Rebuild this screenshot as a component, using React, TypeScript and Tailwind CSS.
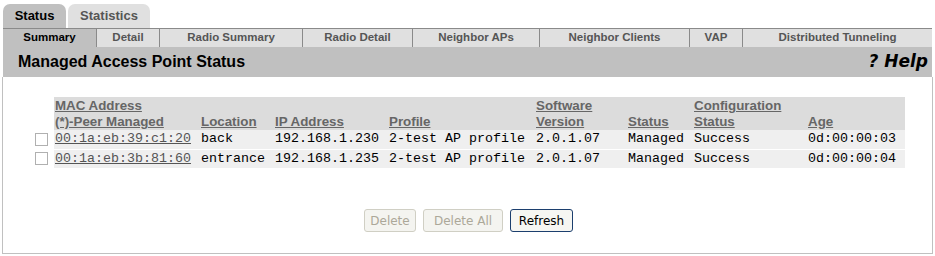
import React from "react";

const subtabs = [
  { label: "Summary", w: 94, active: true },
  { label: "Detail", w: 63 },
  { label: "Radio Summary", w: 143 },
  { label: "Radio Detail", w: 110 },
  { label: "Neighbor APs", w: 127 },
  { label: "Neighbor Clients", w: 150 },
  { label: "VAP", w: 53 },
  { label: "Distributed Tunneling", w: 0 },
];

const rows = [
  ["00:1a:eb:39:c1:20", "back", "192.168.1.230", "2-test AP profile", "2.0.1.07", "Managed", "Success", "0d:00:00:03"],
  ["00:1a:eb:3b:81:60", "entrance", "192.168.1.235", "2-test AP profile", "2.0.1.07", "Managed", "Success", "0d:00:00:04"],
];

const cols: [string, string, number][] = [
  ["MAC Address", "(*)-Peer Managed", 146],
  ["", "Location", 74],
  ["", "IP Address", 114],
  ["", "Profile", 147],
  ["Software", "Version", 92],
  ["", "Status", 66],
  ["Configuration", "Status", 114],
  ["", "Age", 98],
];

export default function App() {
  return (
    <div className="w-[935px] h-[256px] bg-white overflow-hidden" style={{ fontFamily: '"Liberation Sans", Arial, sans-serif' }}>
      <div className="flex items-end gap-[2px] pl-[3px] pt-[4px] h-[28px]">
        <div className="w-[63px] h-[24px] bg-[#c0c0c0] rounded-t-[7px] flex items-center justify-center text-[13px] font-bold text-black">Status</div>
        <div className="w-[82px] h-[24px] bg-[#e0e0e0] rounded-t-[7px] flex items-center justify-center text-[13px] font-bold text-[#555]">Statistics</div>
      </div>
      <div className="mx-[3px] flex h-[19px] border-t border-[#8a8a8a] bg-[#e0e0e0]">
        {subtabs.map((t, i) => (
          <div
            key={t.label}
            className={`flex items-center justify-center text-[11.5px] font-bold ${t.active ? "bg-[#c0c0c0] text-black" : "text-[#555]"} ${i < subtabs.length - 1 ? "border-r border-[#8a8a8a]" : "flex-1"}`}
            style={t.w ? { width: t.w } : undefined}
          >
            {t.label}
          </div>
        ))}
      </div>
      <div className="mx-[3px] h-[30px] bg-[#c0c0c0] flex items-center justify-between pl-[15px] pr-[4px]">
        <span className="text-[16px] font-bold text-black">Managed Access Point Status</span>
        <span className="text-[17px] font-bold italic text-black" style={{ fontFamily: '"DejaVu Sans", Verdana, sans-serif' }}>? Help</span>
      </div>
      <div className="mx-[2px] h-[177px] border-l border-r border-b border-[#c0c0c0] pt-[20px]">
        <table className="ml-[29px] border-collapse table-fixed" style={{ borderSpacing: 0, width: 873 }}>
          <colgroup>
            <col style={{ width: 22 }} />
            {cols.map((c, i) => (
              <col key={i} style={{ width: c[2] }} />
            ))}
          </colgroup>
          <thead>
            <tr className="text-[13.33px] font-bold text-[#666] align-bottom leading-[16px]">
              <th className="bg-white"></th>
              {cols.map(([a, b], i) => (
                <th key={i} className="bg-[#dcdcdc] text-left font-bold pt-[1px] pb-0 pl-[1px] whitespace-nowrap">
                  {a ? <div className="underline">{a}</div> : null}
                  <div className="underline">{b}</div>
                </th>
              ))}
            </tr>
          </thead>
          <tbody>
            {rows.map((r, ri) => (
              <tr key={ri} className="text-[13.33px] h-[19px] leading-[16px] text-black" style={{ fontFamily: '"Liberation Mono", "Courier New", monospace' }}>
                <td className="bg-white align-middle">
                  <div className="w-[13px] h-[13px] border border-[#b0b0b0] bg-white ml-[3px]"></div>
                </td>
                {r.map((c, ci) => (
                  <td key={ci} className={`bg-[#efefef] pl-[1px] whitespace-nowrap ${ri === 0 ? "border-b border-white" : ""}`}>
                    {ci === 0 ? <span className="underline text-[#555]">{c}</span> : c}
                  </td>
                ))}
              </tr>
            ))}
          </tbody>
        </table>
        <div className="flex justify-center gap-[7px] mt-[41px] pl-[2px]" style={{ fontFamily: '"DejaVu Sans", Tahoma, sans-serif' }}>
          <button className="h-[23px] w-[52px] rounded-[3px] border border-[#d0cfc4] bg-[#f4f4f0] text-[12px] text-[#aca899]">Delete</button>
          <button className="h-[23px] w-[80px] rounded-[3px] border border-[#d0cfc4] bg-[#f4f4f0] text-[12px] text-[#aca899]">Delete All</button>
          <button className="h-[23px] w-[63px] rounded-[3px] border border-[#1c3f6e] bg-[#f6f6f2] text-[12px] text-black">Refresh</button>
        </div>
      </div>
    </div>
  );
}
